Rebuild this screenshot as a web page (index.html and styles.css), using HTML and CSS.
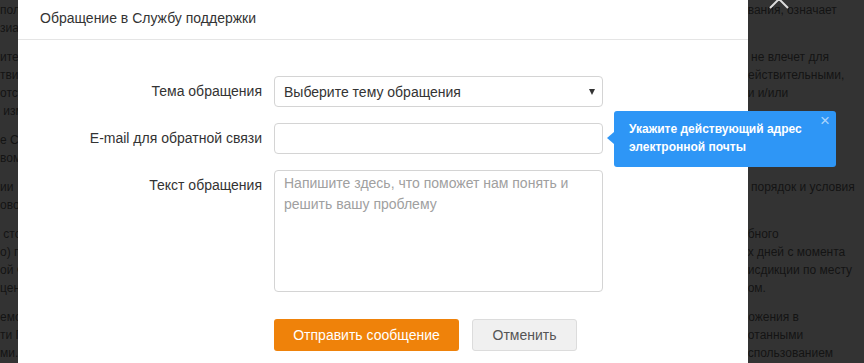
FILE: index.html
```html
<!DOCTYPE html>
<html lang="ru">
<head>
    <meta charset="UTF-8">
    <meta name="viewport" content="width=device-width, initial-scale=1.0">
    <title>Обращение в Службу поддержки</title>
    <link rel="stylesheet" href="styles.css">
</head>
<body>
    <!-- Page behind the overlay -->
    <div class="page">
        <div class="strip strip-left">
            <p>польз<br>зиат</p>
            <p>ителя<br>твит<br>отсу<br>&nbsp;изм</p>
            <p>е Сл<br>вом</p>
            <p>ии<br>овор</p>
            <p>&nbsp;сто<br>о) пр<br>ой Ф<br>цен</p>
            <p>емо<br>ти П<br>ми.</p>
        </div>
        <div class="strip strip-right">
            <p>ования, означает<br>&nbsp;</p>
            <p>о не влечет для<br>действительными,<br>ни и/или<br>&nbsp;</p>
            <p>&nbsp;<br>&nbsp;</p>
            <p>и порядок и условия<br>&nbsp;</p>
            <p>обного<br>их дней с момента<br>рисдикции по месту<br>ном.</p>
            <p>ложения в<br>ботанными<br>использованием</p>
        </div>
    </div>

    <!-- Support request dialog -->
    <div class="modal">
        <button class="modal-close" aria-label="Закрыть">
            <svg width="22" height="22" viewBox="0 0 22 22">
                <path d="M2 2 L20 20 M20 2 L2 20" stroke="#dcdcdc" stroke-width="2" fill="none"/>
            </svg>
        </button>

        <div class="modal-header">Обращение в Службу поддержки</div>

        <form class="modal-body">
            <label class="label" for="topic">Тема обращения</label>
            <div class="field-wrap">
                <select class="field" id="topic">
                    <option>Выберите тему обращения</option>
                </select>
                <span class="caret"></span>
            </div>

            <label class="label" for="email">E-mail для обратной связи</label>
            <div class="field-wrap">
                <input class="field" id="email" type="text">
                <div class="tip">
                    Укажите действующий адрес электронной почты
                    <span class="tip-close">×</span>
                </div>
            </div>

            <label class="label" for="message">Текст обращения</label>
            <textarea class="field area" id="message" placeholder="Напишите здесь, что поможет нам понять и решить вашу проблему"></textarea>

            <div class="actions">
                <button type="button" class="btn btn-send">Отправить сообщение</button>
                <button type="button" class="btn btn-cancel">Отменить</button>
            </div>
        </form>
    </div>
</body>
</html>
```

FILE: styles.css
```css
body {
    margin: 0;
    background-color: #333333;
    font-family: "Liberation Sans", Arial, sans-serif;
    overflow: hidden;
}

/* Page under the dark overlay */
.page {
    display: flex;
    justify-content: space-between;
    padding-top: 1px;
}

.strip {
    font-size: 12px;
    line-height: 18px;
    color: #141414;
    white-space: nowrap;
    overflow: hidden;
}

.strip p {
    margin: 0 0 11px;
}

.strip-left {
    width: 18px;
}

.strip-right {
    width: 123px;
}

/* Dialog */
.modal {
    position: absolute;
    top: -3px;
    left: 18px;
    width: 730px;
    min-height: 366px;
    background-color: #ffffff;
    color: #333333;
}

.modal-close {
    position: absolute;
    top: -9px;
    left: calc(100% + 20px);
    padding: 0;
    background: none;
    border: none;
}

.modal-close svg {
    display: block;
}

.modal-header {
    padding: 11px 22px;
    font-size: 14px;
    line-height: 20px;
    border-bottom: 1px solid #e5e5e5;
}

.modal-body {
    display: grid;
    grid-template-columns: 244px 329px;
    column-gap: 12px;
    row-gap: 16px;
    padding-top: 36px;
}

.label {
    text-align: right;
    font-size: 14px;
    line-height: 31px;
    color: #333333;
}

.field-wrap {
    position: relative;
}

.field {
    display: block;
    width: 100%;
    height: 31px;
    box-sizing: border-box;
    margin: 0;
    padding: 0 9px;
    border: 1px solid #d4d4d4;
    border-radius: 4px;
    background-color: #ffffff;
    font-family: inherit;
    font-size: 14px;
    color: #333333;
    appearance: none;
    outline: none;
}

.caret {
    position: absolute;
    top: 13px;
    right: 8px;
    border-left: 3.5px solid transparent;
    border-right: 3.5px solid transparent;
    border-top: 6px solid #333333;
}

.area {
    height: 122px;
    padding: 2px 9px;
    line-height: 21px;
    resize: none;
}

.area::placeholder {
    color: #a0a0a0;
}

/* Validation hint */
.tip {
    position: absolute;
    top: -12px;
    left: calc(100% + 11px);
    width: 222px;
    height: 56px;
    box-sizing: border-box;
    padding: 9px 28px 0 15px;
    background-color: #2e96f6;
    border-radius: 3px;
    color: #ffffff;
    font-size: 12px;
    font-weight: bold;
    line-height: 18px;
    z-index: 5;
}

.tip::before {
    content: "";
    position: absolute;
    top: 21px;
    left: -7px;
    border-top: 6px solid transparent;
    border-bottom: 6px solid transparent;
    border-right: 7px solid #2e96f6;
}

.tip-close {
    position: absolute;
    top: 2px;
    right: 6px;
    font-size: 17px;
    font-weight: normal;
    line-height: 16px;
    color: rgba(255, 255, 255, 0.6);
}

/* Buttons */
.actions {
    grid-column: 2;
    display: flex;
    gap: 13px;
    margin-top: 11px;
}

.btn {
    height: 32px;
    padding: 0;
    border-radius: 3px;
    font-family: inherit;
    font-size: 14px;
    cursor: pointer;
}

.btn-send {
    width: 185px;
    border: none;
    background-color: #ef820a;
    color: #ffffff;
}

.btn-cancel {
    width: 105px;
    border: 1px solid #dcdcdc;
    background-color: #f0f0f0;
    color: #555555;
}
```
